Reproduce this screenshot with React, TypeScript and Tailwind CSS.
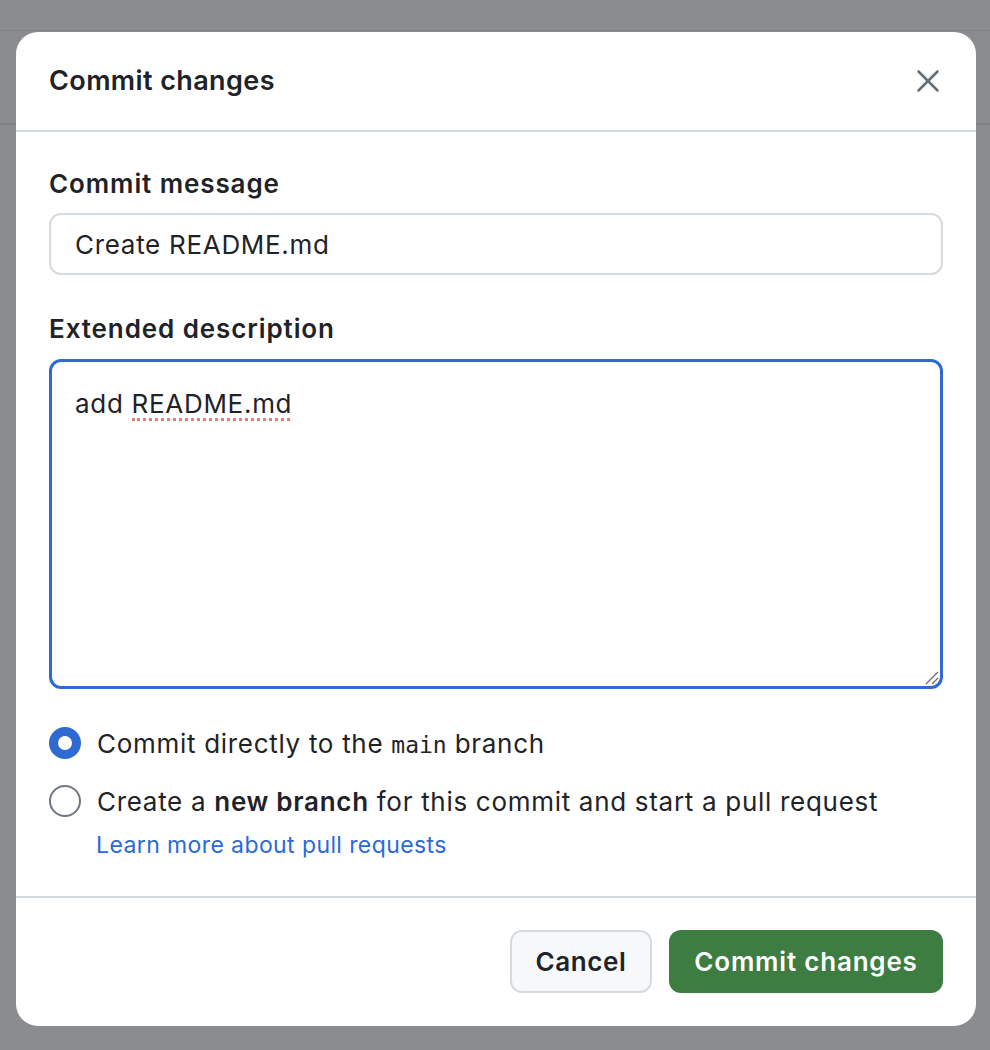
import { X } from 'lucide-react';

function Radio({ checked }: { checked?: boolean }) {
  return checked ? (
    <span className="h-[32px] w-[32px] shrink-0 rounded-full border-[9px] border-[#2f6ad3] bg-white" />
  ) : (
    <span className="h-[32px] w-[32px] shrink-0 rounded-full border-2 border-[#6e7781] bg-white" />
  );
}

export default function App() {
  return (
    <div
      className="relative h-[1050px] w-[990px] overflow-hidden bg-[#8b8c8f]"
      style={{ fontFamily: 'Inter, "Noto Sans", sans-serif' }}
    >
      {/* page behind the backdrop */}
      <div className="h-[31px] border-b border-[#808185]" />
      <div className="h-[94px] border-b-2 border-[#7f8083]" />

      <div className="absolute left-[16px] top-[32px] flex h-[994px] w-[960px] flex-col rounded-[22px] bg-white text-[#1f2328]">
        <div className="flex h-[100px] items-center justify-between border-b-2 border-[#d4dbe1] pl-[33px] pr-[29px]">
          <h2 className="text-[27px] font-semibold leading-[32px] tracking-[0.4px]">Commit changes</h2>
          <button type="button" className="text-[#656d76]">
            <X size={38} strokeWidth={1.6} />
          </button>
        </div>

        <div className="flex flex-col px-[33px] pb-[36px] pt-[36px]">
          <label className="text-[26px] font-semibold leading-[32px] tracking-[0.9px]">Commit message</label>
          <div className="mt-[13px] flex h-[62px] items-center rounded-[12px] border-2 border-[#d4dbe1] px-[24px] text-[26px] tracking-[0.7px]">
            Create README.md
          </div>

          <label className="mt-[38px] text-[26px] font-semibold leading-[32px] tracking-[0.9px]">
            Extended description
          </label>
          <div className="relative mt-[14px] h-[330px] rounded-[12px] border-[3px] border-[#2f6ad3] px-[23px] pt-[25px] text-[26px] leading-[34px] tracking-[0.7px]">
            add{' '}
            <span className="relative inline-block">
              README.md
              {/* spellcheck squiggle */}
              <span className="absolute bottom-0 left-0 right-[2px] border-b-[3px] border-dotted border-[#ee7b6f]" />
            </span>
            <svg className="absolute bottom-[1px] right-[1px]" width="16" height="16" viewBox="0 0 16 16">
              <path d="M15 3 L3 15 M15 9 L9 15" stroke="#6e6e6e" strokeWidth="1.3" />
            </svg>
          </div>

          <div className="mt-[34px] flex h-[40px] items-center gap-[16px] text-[26px] tracking-[0.7px]">
            <Radio checked />
            <span>
              Commit directly to the{' '}
              <code
                className="text-[23px] tracking-normal"
                style={{ fontFamily: '"DejaVu Sans Mono", "Liberation Mono", monospace' }}
              >
                main
              </code>{' '}
              branch
            </span>
          </div>
          <div className="mt-[18px] flex h-[40px] items-center gap-[16px] text-[26px] tracking-[0.7px]">
            <Radio />
            <span>
              Create a <b className="font-semibold">new branch</b> for this commit and start a pull request
            </span>
          </div>
          <a href="#" className="ml-[47px] mt-[9px] text-[23px] leading-[30px] tracking-[0.4px] text-[#2a6ad8]">
            Learn more about pull requests
          </a>
        </div>

        <div className="flex flex-1 items-start justify-end gap-[17px] border-t-2 border-[#d4dbe1] px-[33px] pt-[32px]">
          <button
            type="button"
            className="h-[63px] w-[142px] rounded-[12px] border-2 border-[#d6dbe0] bg-[#f6f8fa] text-[26px] font-semibold tracking-[0.6px]"
          >
            Cancel
          </button>
          <button
            type="button"
            className="h-[63px] w-[274px] rounded-[12px] bg-[#3d7d41] text-[26px] font-semibold tracking-[0.8px] text-white"
          >
            Commit changes
          </button>
        </div>
      </div>
    </div>
  );
}
